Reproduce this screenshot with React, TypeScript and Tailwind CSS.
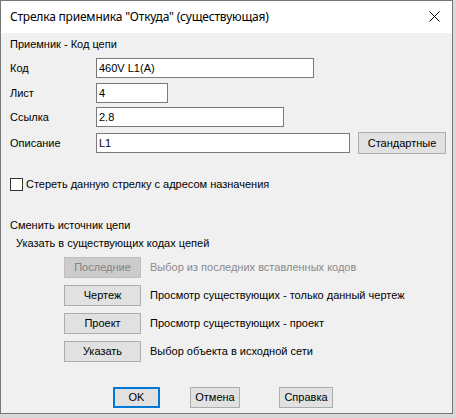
import React from "react";

const lbl = "font-['Liberation_Sans',Arial,sans-serif] text-[11px] leading-[13px] text-black";

function Field({ label, value, w, mt }: { label: string; value: string; w: string; mt: string }) {
  return (
    <div className={`flex items-center ${mt}`}>
      <div className={`w-[95px] pl-[9px] ${lbl}`}>{label}</div>
      <div className={`h-[20px] ${w} border border-[#7a7a7a] bg-white pl-[2px] flex items-center ${lbl}`}>{value}</div>
    </div>
  );
}

function Btn({ children, w, primary, disabled }: { children: React.ReactNode; w: string; primary?: boolean; disabled?: boolean }) {
  const base = `h-[21px] ${w} flex items-center justify-center ${lbl}`;
  if (disabled)
    return <div className={`${base} bg-[#cccccc] border border-[#bfbfbf] !text-[#838383]`}>{children}</div>;
  if (primary)
    return <div className={`${base} bg-[#e1e1e1] border-2 border-[#0078d7]`}>{children}</div>;
  return <div className={`${base} bg-[#e1e1e1] border border-[#adadad]`}>{children}</div>;
}

function Choice({ btn, text, mt, disabled }: { btn: string; text: string; mt: string; disabled?: boolean }) {
  return (
    <div className={`flex items-center ${mt} pl-[63px]`}>
      <Btn w="w-[77px]" disabled={disabled}>{btn}</Btn>
      <div className={`ml-[9px] ${lbl} ${disabled ? "!text-[#8a8a8a]" : ""}`}>{text}</div>
    </div>
  );
}

export default function App() {
  return (
    <div className="w-[456px] h-[418px] bg-[#d9d9d9]">
      <div className="w-[453px] h-[414px] border border-[#777777] bg-[#f0f0f0] flex flex-col">
        <div className="h-[32px] bg-white flex items-center justify-between pl-[9px] pr-[12px]">
          <div className="font-['Noto_Sans',sans-serif] text-[12px] text-black tracking-[-0.2px] pb-[1px]">
            Стрелка приемника "Откуда" (существующая)
          </div>
          <svg width="11" height="11" viewBox="0 0 11 11" className="mb-[1px]">
            <path d="M0.5 0.5 L10.5 10.5 M10.5 0.5 L0.5 10.5" stroke="#000" strokeWidth="1" fill="none" />
          </svg>
        </div>
        <div className={`mt-[5px] pl-[9px] ${lbl}`}>Приемник - Код цепи</div>
        <Field label="Код" value="460V L1(A)" w="w-[218px]" mt="mt-[7px]" />
        <Field label="Лист" value="4" w="w-[72px]" mt="mt-[5px]" />
        <Field label="Ссылка" value="2.8" w="w-[188px]" mt="mt-[4px]" />
        <div className="flex items-center mt-[5px]">
          <div className={`w-[95px] pl-[9px] ${lbl}`}>Описание</div>
          <div className={`h-[20px] w-[254px] border border-[#7a7a7a] bg-white pl-[2px] flex items-center ${lbl}`}>L1</div>
          <div className="ml-[8px]">
            <div className={`h-[22px] w-[88px] flex items-center justify-center bg-[#e1e1e1] border border-[#adadad] ${lbl}`}>Стандартные</div>
          </div>
        </div>
        <div className="flex items-center mt-[24px] pl-[9px]">
          <div className="w-[13px] h-[13px] border border-[#333333] bg-white" />
          <div className={`ml-[3px] ${lbl}`}>Стереть данную стрелку с адресом назначения</div>
        </div>
        <div className={`mt-[28px] pl-[9px] ${lbl}`}>Сменить источник цепи</div>
        <div className={`mt-[5px] pl-[15px] ${lbl}`}>Указать в существующих кодах цепей</div>
        <Choice btn="Последние" text="Выбор из последних вставленных кодов" mt="mt-[7px]" disabled />
        <Choice btn="Чертеж" text="Просмотр существующих - только данный чертеж" mt="mt-[7px]" />
        <Choice btn="Проект" text="Просмотр существующих - проект" mt="mt-[7px]" />
        <Choice btn="Указать" text="Выбор объекта в исходной сети" mt="mt-[7px]" />
        <div className="flex mt-[25px]">
          <div className="ml-[112px]"><Btn w="w-[47px]" primary>OK</Btn></div>
          <div className="ml-[30px]"><Btn w="w-[50px]">Отмена</Btn></div>
          <div className="ml-[39px]"><Btn w="w-[54px]">Справка</Btn></div>
        </div>
      </div>
    </div>
  );
}
